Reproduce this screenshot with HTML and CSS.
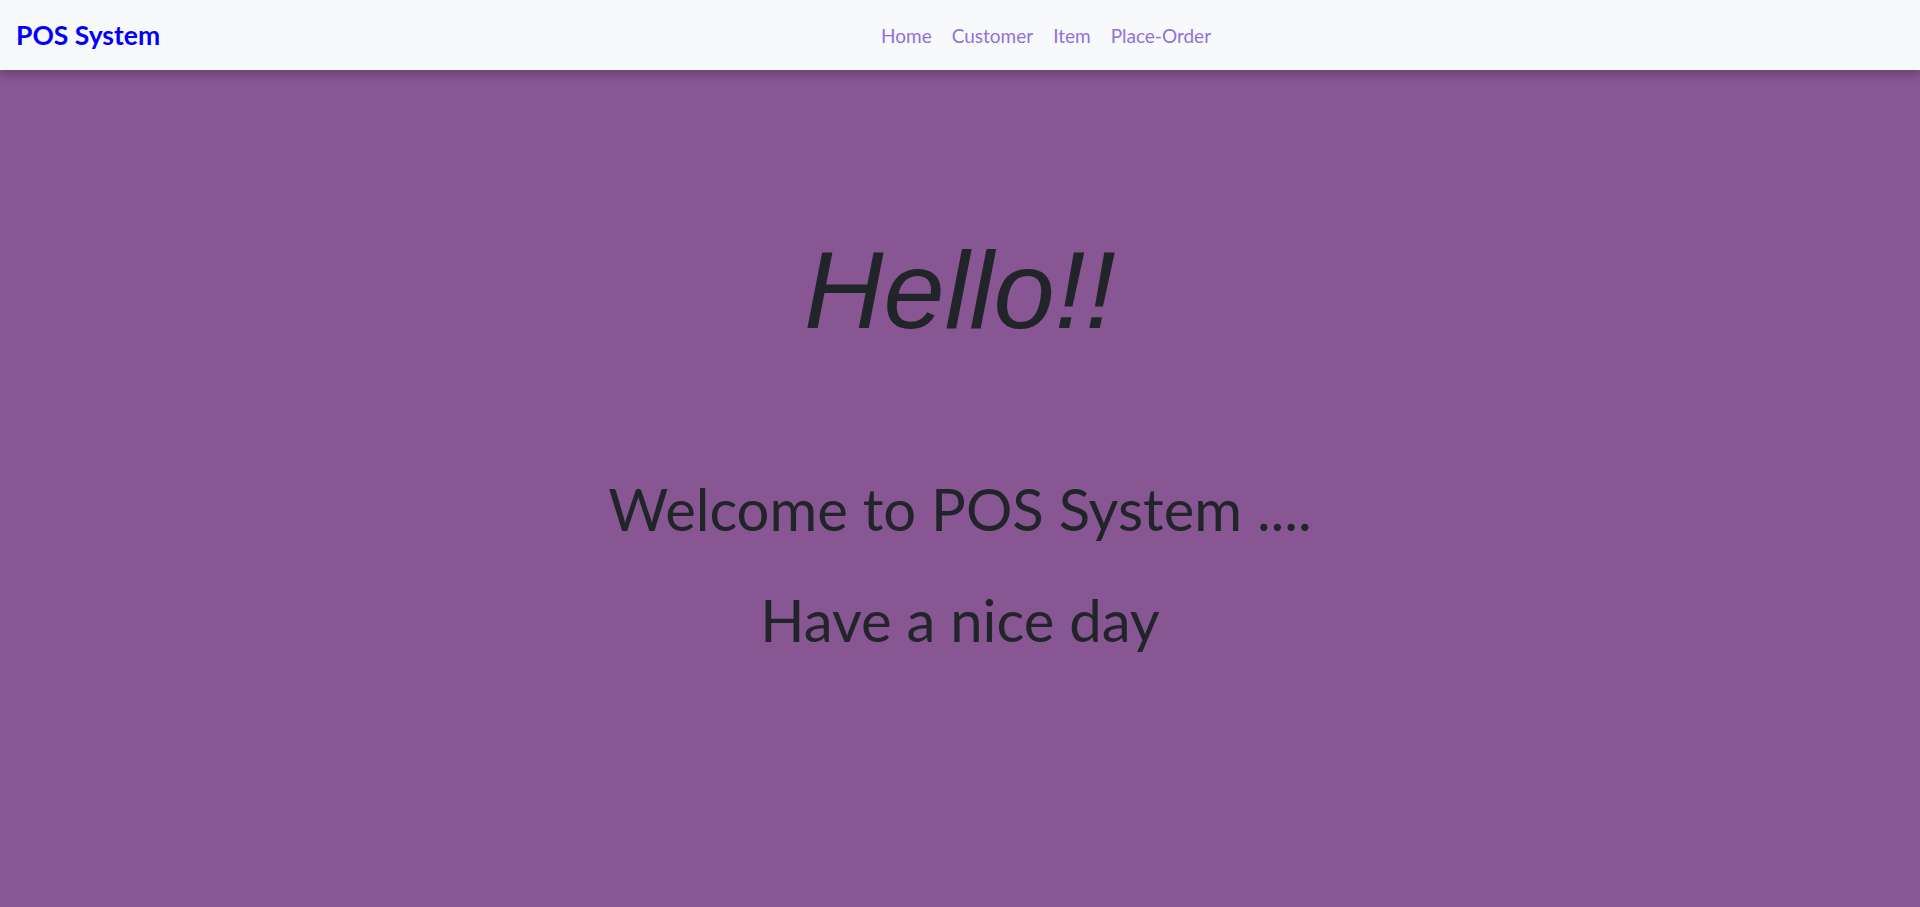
FILE: index.html
```html
<!DOCTYPE html>
<html lang="en">
<head>
<meta charset="utf-8">
<title>POS System</title>
<link rel="stylesheet" href="styles.css">
</head>
<body>
<nav class="navbar">
  <a class="brand" href="#">POS System</a>
  <ul class="nav-links">
    <li><a href="#">Home</a></li>
    <li><a href="#">Customer</a></li>
    <li><a href="#">Item</a></li>
    <li><a href="#">Place-Order</a></li>
  </ul>
</nav>
<main class="hero">
  <h1 class="hello">Hello!!</h1>
  <h2 class="welcome">Welcome to POS System ....</h2>
  <h2 class="welcome second">Have a nice day</h2>
</main>
</body>
</html>
```
FILE: styles.css
```css
html, body {
  margin: 0;
  padding: 0;
  height: 100%;
}
body {
  background: #875693;
  font-family: Lato, "Open Sans", sans-serif;
  color: #212529;
  overflow: hidden;
}
.navbar {
  position: relative;
  z-index: 2;
  height: 70px;
  background: #f8f9fa;
  box-shadow: 0 4px 10px rgba(0, 0, 0, 0.25);
  display: flex;
  align-items: center;
  padding: 0 16px;
  box-sizing: border-box;
}
.brand {
  font-weight: 700;
  font-size: 26.5px;
  color: #0000ff;
  text-decoration: none;
  margin-right: 28px;
}
.nav-links {
  list-style: none;
  margin: 0 auto;
  padding: 0;
  display: flex;
  gap: 4px;
}
.nav-links a {
  display: block;
  padding: 8px;
  font-size: 19px;
  color: #9370db;
  text-decoration: none;
}
.hero {
  display: flex;
  flex-direction: column;
  align-items: center;
  text-align: center;
}
.hello {
  margin: 165px 0 0;
  font-family: "Liberation Sans", Arial, sans-serif;
  font-style: italic;
  font-weight: 400;
  font-size: 110px;
  line-height: 1;
}
.welcome {
  margin: 129px 0 0;
  font-weight: 400;
  font-size: 58px;
  line-height: 1.2;
}
.welcome.second {
  margin-top: 41px;
}
```
